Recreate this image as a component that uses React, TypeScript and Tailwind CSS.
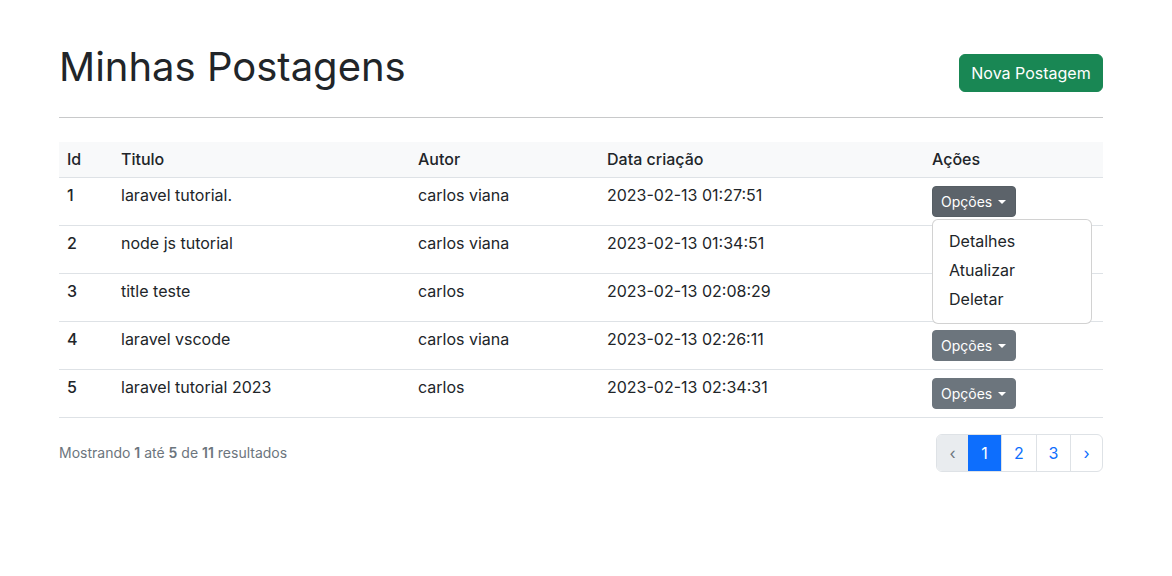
import React from "react";

const rows = [
  { id: 1, titulo: "laravel tutorial.", autor: "carlos viana", data: "2023-02-13 01:27:51" },
  { id: 2, titulo: "node js tutorial", autor: "carlos viana", data: "2023-02-13 01:34:51" },
  { id: 3, titulo: "title teste", autor: "carlos", data: "2023-02-13 02:08:29" },
  { id: 4, titulo: "laravel vscode", autor: "carlos viana", data: "2023-02-13 02:26:11" },
  { id: 5, titulo: "laravel tutorial 2023", autor: "carlos", data: "2023-02-13 02:34:31" },
];

function Caret() {
  return (
    <span className="ml-[6px] inline-block h-0 w-0 border-x-[4px] border-t-[4.5px] border-x-transparent border-t-white align-middle" />
  );
}

function OptionsButton({ active }: { active?: boolean }) {
  return (
    <button
      className={
        "flex h-[31px] w-[84px] items-center rounded-[4px] border px-2 text-[14px] leading-[21px] text-white " +
        (active ? "border-[#565e64] bg-[#5c636a]" : "border-[#6c757d] bg-[#6c757d]")
      }
    >
      <span>Opções</span>
      <Caret />
    </button>
  );
}

export default function App() {
  return (
    <div
      className="min-h-[576px] bg-white text-[#212529]"
      style={{ fontFamily: "Inter, 'Noto Sans', sans-serif" }}
    >
      <div className="ml-[59px] w-[1044px] pt-[43px]">
        <div className="flex items-start justify-between">
          <h1 className="text-[40px] leading-[48px] font-normal">Minhas Postagens</h1>
          <button className="mt-[11px] h-[38px] w-[144px] rounded-[6px] border border-[#198754] bg-[#198754] text-[16px] text-white">
            Nova Postagem
          </button>
        </div>
        <div className="mt-[25px] h-px bg-[#c8c9ca]" />
        <div className="mt-[24px]">
          <div className="grid grid-cols-[54px_297px_189px_325px_179px] border-b border-[#dee2e6] bg-[#f8f9fa] font-medium">
            <div className="px-2 pt-[8px] pb-[8px] text-[16px] leading-[19px]">Id</div>
            <div className="px-2 pt-[8px] pb-[8px] text-[16px] leading-[19px]">Titulo</div>
            <div className="px-2 pt-[8px] pb-[8px] text-[16px] leading-[19px]">Autor</div>
            <div className="px-2 pt-[8px] pb-[8px] text-[16px] leading-[19px]">Data criação</div>
            <div className="px-2 pt-[8px] pb-[8px] text-[16px] leading-[19px]">Ações</div>
          </div>
          {rows.map((r, i) => (
            <div
              key={r.id}
              className="grid h-[48px] grid-cols-[54px_297px_189px_325px_179px] border-b border-[#dee2e6] text-[16px] leading-[24px]"
            >
              <div className="px-2 pt-[5px] font-medium">{r.id}</div>
              <div className="px-2 pt-[5px]">{r.titulo}</div>
              <div className="px-2 pt-[5px]">{r.autor}</div>
              <div className="px-2 pt-[5px]">{r.data}</div>
              <div className="px-2 pt-[8px]">
                <div className="relative inline-block">
                  <OptionsButton active={i === 0} />
                  {i === 0 && (
                    <div className="absolute top-[calc(100%+2px)] left-0 z-10 w-[160px] rounded-[6px] border border-[rgba(0,0,0,0.175)] bg-white pt-[6px] pb-[10px]">
                      <div className="flex h-[29px] items-center px-4 text-[16px]">Detalhes</div>
                      <div className="flex h-[29px] items-center px-4 text-[16px]">Atualizar</div>
                      <div className="flex h-[29px] items-center px-4 text-[16px]">Deletar</div>
                    </div>
                  )}
                </div>
              </div>
            </div>
          ))}
        </div>
        <div className="mt-[16px] flex items-center justify-between">
          <p className="-mt-[2px] text-[14px] leading-[21px] text-[#6c757d]">
            Mostrando <span className="font-semibold">1</span> até <span className="font-semibold">5</span> de{" "}
            <span className="font-semibold">11</span> resultados
          </p>
          <div className="flex h-[38px] overflow-hidden rounded-[6px] border border-[#dee2e6] text-[16px]">
            <div className="flex w-[31px] items-center justify-center bg-[#e9ecef] text-[#6c757d]">‹</div>
            <div className="flex w-[33px] items-center justify-center bg-[#0d6efd] text-white">1</div>
            <div className="flex w-[35px] items-center justify-center border-l border-[#dee2e6] text-[#0d6efd]">2</div>
            <div className="flex w-[34px] items-center justify-center border-l border-[#dee2e6] text-[#0d6efd]">3</div>
            <div className="flex w-[32px] items-center justify-center border-l border-[#dee2e6] text-[#0d6efd]">›</div>
          </div>
        </div>
      </div>
    </div>
  );
}
